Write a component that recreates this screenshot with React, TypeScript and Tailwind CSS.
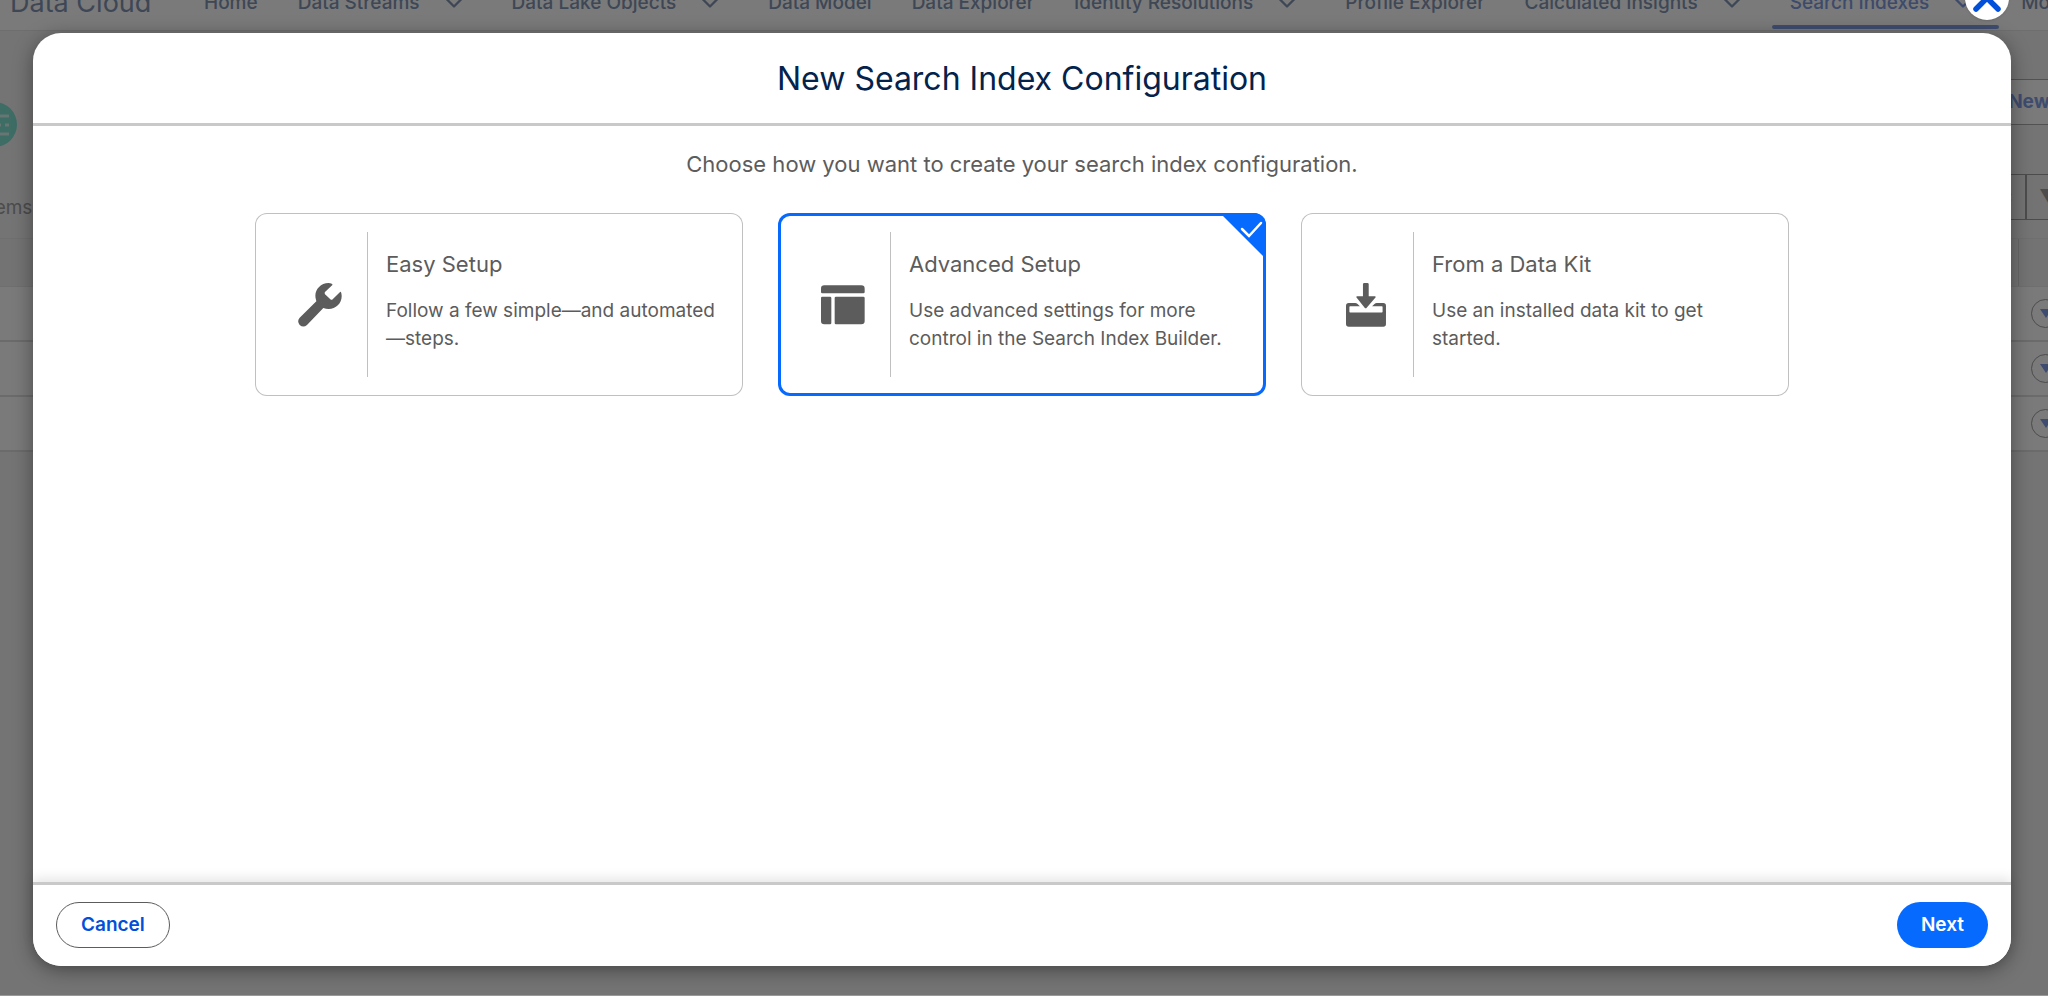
import { useState } from "react";
import type { ReactNode } from "react";
import { ChevronDown, Settings, X } from "lucide-react";

const tabs: readonly {
  label: string;
  menu?: boolean;
  active?: boolean;
}[] = [
  { label: "Home" },
  { label: "Data Streams", menu: true },
  { label: "Data Lake Objects", menu: true },
  { label: "Data Model" },
  { label: "Data Explorer" },
  { label: "Identity Resolutions", menu: true },
  { label: "Profile Explorer" },
  { label: "Calculated Insights", menu: true },
  { label: "Search Indexes", menu: true, active: true },
  { label: "More" },
];

function WrenchIcon() {
  return (
    <svg viewBox="0 0 132 132" className="h-11 w-11" fill="currentColor" aria-hidden>
      <path d="M104 5 L81 27 Q79 30 81 34 L97 49 Q101 52 104 49 L127 26 Q130 25 131 38 C132 60 114 78 92 78 Q84 78 76 75 L27 126 Q16 135 5 126 Q-4 115 5 104 L55 55 L54 50 C46 26 64 0 92 0 Q102 0 104 5Z" />
    </svg>
  );
}

function LayoutIcon() {
  return (
    <svg viewBox="0 0 132 118" className="h-10 w-11" fill="currentColor" aria-hidden>
      <path d="M10 0H121Q131 0 131 10V20Q131 24 127 24H4Q0 24 0 20V10Q0 0 10 0Z" />
      <path d="M4 34H27Q31 34 31 38V113Q31 117 27 117H10Q0 117 0 107V38Q0 34 4 34Z" />
      <path d="M45 34H127Q131 34 131 38V107Q131 117 121 117H45Q41 117 41 113V38Q41 34 45 34Z" />
    </svg>
  );
}

function InstallIcon() {
  return (
    <svg viewBox="0 0 118 130" className="h-11 w-10" fill="currentColor" aria-hidden>
      <path d="M8 59H27Q31 59 34 62L41 69H12Q10 69 10 71V85Q10 87 12 87H106Q108 87 108 85V71Q108 69 106 69H77L84 62Q87 59 91 59H110Q118 59 118 67V121Q118 129 110 129H8Q0 129 0 121V67Q0 59 8 59Z" />
      <path d="M54 0H63Q67 0 67 4V39H85Q90 40 87 43L61 73Q58 76 55 73L31 43Q28 40 33 39H50V4Q50 0 54 0Z" />
    </svg>
  );
}

const options: readonly {
  id: string;
  title: string;
  body: string;
  icon: ReactNode;
}[] = [
  {
    id: "easy",
    title: "Easy Setup",
    body: "Follow a few simple—and automated —steps.",
    icon: <WrenchIcon />,
  },
  {
    id: "advanced",
    title: "Advanced Setup",
    body: "Use advanced settings for more control in the Search Index Builder.",
    icon: <LayoutIcon />,
  },
  {
    id: "kit",
    title: "From a Data Kit",
    body: "Use an installed data kit to get started.",
    icon: <InstallIcon />,
  },
];

function TopNav() {
  return (
    <header className="-mt-6 flex h-[55px] items-center border-b border-[#e5e5e5] bg-white pl-2.5 whitespace-nowrap text-[#8395b3]">
      <span className="w-[174px] shrink-0 text-[27px]">Data Cloud</span>
      <nav className="flex h-full">
        {tabs.map((tab) => (
          <a
            key={tab.label}
            href="#"
            className={`relative flex shrink-0 items-center pl-5 text-[19px] font-medium ${
              tab.active ? "text-[#7f9be0]" : ""
            } ${tab.menu ? "pr-6" : "pr-5"}`}
          >
            {tab.label}
            {tab.menu && <ChevronDown className="ml-5 h-7 w-7" strokeWidth={2} aria-hidden />}
            {tab.active && (
              <span className="absolute inset-x-0.5 bottom-px h-1 rounded-full bg-[#829fe8]" />
            )}
          </a>
        ))}
      </nav>
    </header>
  );
}

function ListPage() {
  return (
    <main className="flex flex-col">
      <div className="flex h-[111px] items-start justify-between pt-12">
        <span className="mt-[23px] -ml-7 flex h-[45px] w-[45px] items-center justify-end rounded-full bg-[#7fe4d4] pr-2">
          <svg viewBox="0 0 24 24" className="h-6 w-6" stroke="#d8f5f0" strokeWidth="3" aria-hidden>
            <path d="M0 3H24M0 12H16M20 12H24M0 21H24" />
          </svg>
        </span>
        <button
          type="button"
          className="-mr-6 h-[46px] w-[90px] border border-[#ababab] bg-white pr-5 pl-6 text-[19px] font-bold text-[#829fe8]"
        >
          New
        </button>
      </div>
      <div className="flex h-24 items-start justify-between pt-8">
        <p className="mt-5 -ml-4 text-[19px] text-[#a0a0a0]">items</p>
        <div className="-mr-6 flex h-[46px] border border-[#a0a0a0] bg-[#f0f0f0]">
          <span className="flex w-10 items-center justify-end border-r-2 border-[#a0a0a0] pr-3">
            <Settings className="h-5 w-5 text-[#a0a0a0]" aria-hidden />
          </span>
          <span className="flex w-11 items-center pl-3 text-xl text-[#a0a0a0]">▼</span>
        </div>
      </div>
      <div className="flex h-[49px] justify-end border-y border-[#e8e8e8] bg-[#f0f0f0]">
        <span className="w-[30px] border-l border-[#d8d8d8]" />
      </div>
      {["a", "b", "c"].map((row) => (
        <div
          key={row}
          className="flex h-[55px] items-center justify-end border-b-2 border-[#e0e0e0] bg-white"
        >
          <button
            type="button"
            aria-label="Row actions"
            className="-mr-3 flex h-[29px] w-[29px] items-center justify-center rounded-full border border-[#a0a0a0]"
          >
            <svg viewBox="0 0 12 10" className="h-2.5 w-3" fill="#829fe8" aria-hidden>
              <path d="M0 0H12L6 9Z" />
            </svg>
          </button>
        </div>
      ))}
    </main>
  );
}

export default function App() {
  const [selected, setSelected] = useState("advanced");

  return (
    <div className="relative h-screen overflow-hidden bg-[#f3f3f3] font-[Inter,sans-serif]">
      <TopNav />
      <ListPage />

      <div className="absolute inset-0 flex border-b border-[#999] bg-black/52 pt-[33px] pr-[37px] pb-[29px] pl-[33px]">
        <section
          role="dialog"
          aria-labelledby="dialog-title"
          className="relative flex flex-1 flex-col rounded-[28px] bg-white text-[#5c5c5c] shadow-[0_4px_20px_rgba(0,0,0,0.4)]"
        >
          <button
            type="button"
            aria-label="Close"
            className="absolute -top-[57px] right-0.5 flex h-11 w-11 items-center justify-center rounded-full bg-white text-[#0250d9] shadow"
          >
            <X className="h-11 w-11" strokeWidth={3} aria-hidden />
          </button>

          <header className="flex h-[93px] items-center justify-center border-b-3 border-[#c9c9c9] pt-0.5">
            <h1 id="dialog-title" className="text-[32px] text-[#03234d]">
              New Search Index Configuration
            </h1>
          </header>

          <fieldset className="min-h-0 flex-1 px-8 pt-[23px]">
            <legend className="sr-only">Setup type</legend>
            <p className="text-center text-[22px] leading-[30px]">
              Choose how you want to create your search index configuration.
            </p>
            <div className="mx-auto mt-[34px] grid max-w-[1534px] grid-cols-3 gap-[35px]">
              {options.map((option) => {
                const checked = option.id === selected;
                return (
                  <label
                    key={option.id}
                    className={`relative flex min-h-[183px] cursor-pointer overflow-hidden rounded-xl py-[19px] ${
                      checked
                        ? "inset-ring-3 inset-ring-[#066afe]"
                        : "inset-ring inset-ring-[#c0c0c0]"
                    }`}
                  >
                    <input
                      type="radio"
                      name="setup"
                      value={option.id}
                      checked={checked}
                      onChange={() => setSelected(option.id)}
                      className="sr-only"
                    />
                    <span className="flex w-28 shrink-0 items-center justify-center pl-[18px]">
                      {option.icon}
                    </span>
                    <span className="flex flex-col border-l border-[#c0c0c0] pt-[17px] pr-6 pl-[18px]">
                      <span className="text-[22px] leading-[30px]">{option.title}</span>
                      <span className="mt-[18px] text-[19px] leading-7">{option.body}</span>
                    </span>
                    {checked && (
                      <svg
                        viewBox="0 0 46 46"
                        className="absolute top-0 right-0 h-[46px] w-[46px]"
                        aria-hidden
                      >
                        <path d="M0 0H46V46Z" fill="#066afe" />
                        <path
                          d="M22 16L29 23L41 10"
                          fill="none"
                          stroke="white"
                          strokeWidth="2.5"
                          strokeLinecap="round"
                        />
                      </svg>
                    )}
                  </label>
                );
              })}
            </div>
          </fieldset>

          <footer className="flex items-center justify-between rounded-b-[28px] border-t-3 border-[#c9c9c9] bg-white px-[23px] pt-[17px] pb-[18px] shadow-[0_-4px_12px_rgba(0,0,0,0.1)]">
            <button
              type="button"
              className="h-[46px] rounded-full border border-[#5c5c5c] px-6 text-[19px] font-semibold text-[#0250d9]"
            >
              Cancel
            </button>
            <button
              type="button"
              className="h-[46px] rounded-full bg-[#066afe] px-6 text-[19px] font-semibold text-white"
            >
              Next
            </button>
          </footer>
        </section>
      </div>
    </div>
  );
}
